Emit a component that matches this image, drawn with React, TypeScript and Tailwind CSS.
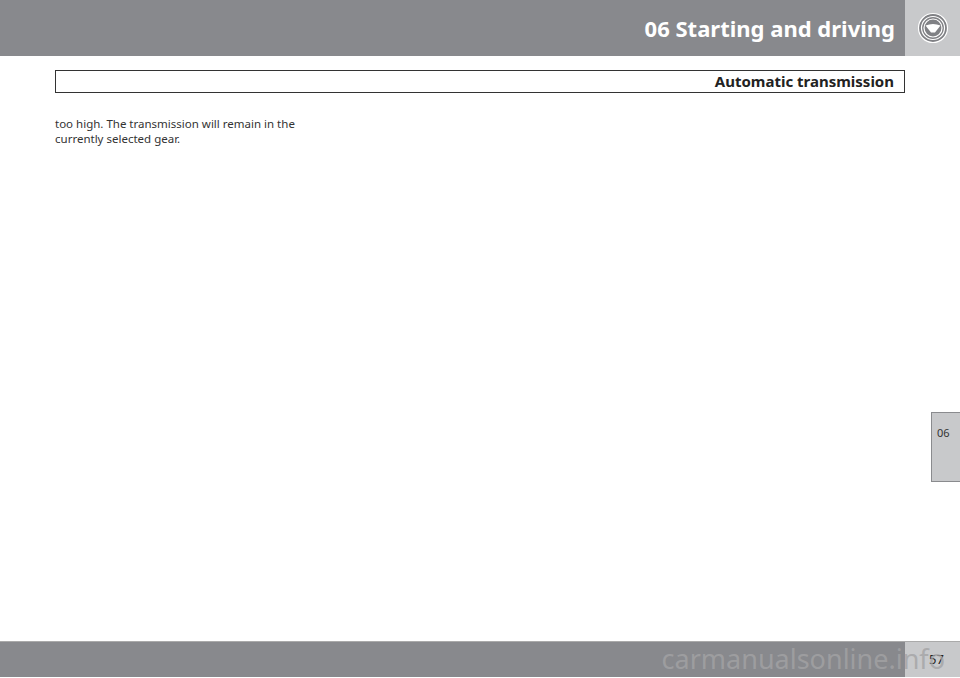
export default function App() {
  return (
    <div className="relative w-[960px] h-[678px] bg-white overflow-hidden font-['Liberation_Sans']">
      <div className="flex h-[56px]">
        <div className="flex-1 bg-[#88898d] flex items-center justify-end pr-[10px]">
          <span className="text-white font-bold text-[22px] leading-none">06 Starting and driving</span>
        </div>
        <div className="w-[55px] bg-[#c8c9cb] flex items-center justify-center">
          <svg width="32" height="32" viewBox="0 0 32 32">
            <circle cx="16" cy="16" r="14.5" fill="#808185" stroke="#fff" strokeWidth="1.2" />
            <circle cx="16" cy="16" r="11.5" fill="none" stroke="#fff" strokeWidth="1.2" />
            <circle cx="16" cy="16" r="9" fill="none" stroke="#fff" strokeWidth="1.2" />
            <path d="M8.5 13.5 Q16 10.5 23.5 13.5 L18 20.5 L14 20.5 Z" fill="#fff" />
          </svg>
        </div>
      </div>
      <div className="ml-[55px] w-[850px] mt-[14px] h-[23px] border border-[#333] flex items-center justify-end pr-[10px]">
        <span className="font-bold text-[15px] text-[#222]">Automatic transmission</span>
      </div>
      <p className="ml-[55px] mt-[23px] w-[280px] text-[11.5px] leading-[15px] text-[#333]">
        too high. The transmission will remain in the currently selected gear.
      </p>
      <div className="absolute right-0 top-[412px] w-[29px] h-[70px] bg-[#c8c9cb] border border-[#8a8b8e] border-r-0 pl-[5px] pt-[6px]">
        <span className="text-[11px] text-[#333]">06</span>
      </div>
      <div className="absolute left-0 bottom-[1px] w-full h-[36px] flex border-t border-[#aaa]">
        <div className="flex-1 bg-[#88898d]" />
        <div className="w-[55px] bg-[#c8c9cb] flex items-center pl-[24px]">
          <span className="text-[13px] text-[#222]">57</span>
        </div>
        <span className="absolute right-[15px] top-[1px] text-[27px] text-[#a3a3a5]/80 leading-[32px]">carmanualsonline.info</span>
      </div>
    </div>
  );
}
